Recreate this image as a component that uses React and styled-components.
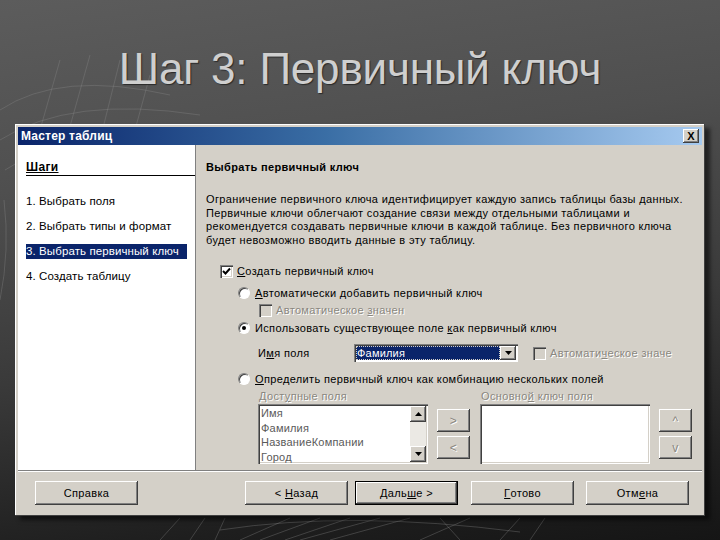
import React from 'react';
import styled, { createGlobalStyle, css } from 'styled-components';

const Global = createGlobalStyle`
  html, body { margin: 0; padding: 0; }
  body { width: 720px; height: 540px; overflow: hidden; background: #1c1c1c; }
`;

const Page = styled.div`
  position: relative;
  width: 720px;
  height: 540px;
  overflow: hidden;
  background: linear-gradient(172deg, #5c5c5c 0%, #4f4f4f 30%, #3a3a3a 60%, #1e1e1e 88%, #151515 100%);
  font-family: "Liberation Sans", Arial, sans-serif;
`;

const Decor = styled.svg`
  position: absolute;
  left: 0;
  top: 0;
  pointer-events: none;
`;

const Heading = styled.h1`
  position: relative;
  margin: 0;
  padding-top: 47px;
  height: 77px;
  text-align: center;
  font-family: "Liberation Sans", Arial, sans-serif;
  font-weight: 400;
  font-size: 44px;
  letter-spacing: -0.2px;
  color: #cfcfcf;
  text-shadow: 1px 1px 1px #2a2a2a;
  line-height: 1;
`;

const Window = styled.div`
  position: relative;
  margin-left: 15px;
  width: 684px;
  height: 386px;
  padding: 3px;
  background: #d4d0c8;
  box-shadow: inset -1px -1px 0 #404040, inset 1px 1px 0 #ffffff, 5px 4px 4px rgba(0, 0, 0, 0.55);
  font-family: "Liberation Sans", Tahoma, sans-serif;
  font-size: 11px;
  letter-spacing: 0.35px;
  color: #000;
  display: flex;
  flex-direction: column;
`;

const TitleBar = styled.div`
  height: 18px;
  display: flex;
  align-items: center;
  justify-content: space-between;
  padding: 0 3px 0 3px;
  background: linear-gradient(90deg, #0a246a 0%, #3a6ea5 45%, #a6caf0 100%);
  color: #fff;
  font-weight: 700;
  font-size: 12px;
  letter-spacing: 0.2px;
`;

const CloseBtn = styled.div`
  width: 16px;
  height: 14px;
  background: #d4d0c8;
  box-shadow: inset -1px -1px 0 #404040, inset 1px 1px 0 #fff, inset -2px -2px 0 #808080;
  display: flex;
  align-items: center;
  justify-content: center;
  color: #000;
  font-size: 11px;
  font-weight: 700;
  line-height: 1;
`;

const Body = styled.div`
  display: flex;
  height: 325px;
`;

const Steps = styled.div`
  width: 178px;
  background: #fff;
  border-right: 1px solid #808080;
  padding-top: 15px;
`;

const StepsTitle = styled.div`
  margin-left: 8px;
  padding-bottom: 1px;
  border-bottom: 1px solid #000;
  font-weight: 700;
  font-size: 12px;
  text-decoration: underline;
`;

const StepList = styled.div`
  margin-top: 18px;
  display: flex;
  flex-direction: column;
  gap: 10px;
`;

const Step = styled.div`
  margin-left: 8px;
  width: 161px;
  height: 15px;
  line-height: 15px;
  font-size: 11.5px;
  letter-spacing: 0.1px;
  white-space: nowrap;
  overflow: hidden;
  ${({ $active }) => $active && css`
    background: #0a246a;
    color: #fff;
  `}
`;

const Content = styled.div`
  flex: 1;
  padding: 16px 0 0 10px;
`;

const ContentTitle = styled.div`
  font-weight: 700;
  font-size: 11px;
  height: 14px;
`;

const Para = styled.p`
  margin: 18px 0 0 0;
  line-height: 13.5px;
  white-space: nowrap;
`;

const Row = styled.div`
  display: flex;
  align-items: center;
  height: 14px;
  margin-left: ${({ $indent }) => $indent || 0}px;
  margin-top: ${({ $top }) => $top || 0}px;
  color: ${({ $disabled }) => ($disabled ? '#8a8780' : '#000')};
  text-shadow: ${({ $disabled }) => ($disabled ? '1px 1px 0 #fff' : 'none')};
  white-space: nowrap;
`;

const Check = styled.span`
  width: 13px;
  height: 13px;
  box-sizing: border-box;
  margin-right: 4px;
  flex: none;
  background: ${({ $disabled }) => ($disabled ? '#d4d0c8' : '#fff')};
  box-shadow: inset 1px 1px 0 #808080, inset 2px 2px 0 #404040, inset -1px -1px 0 #fff, inset -2px -2px 0 #d4d0c8;
  display: flex;
  align-items: center;
  justify-content: center;
`;

const Radio = styled.span`
  width: 12px;
  height: 12px;
  border-radius: 50%;
  margin-right: 5px;
  flex: none;
  background: #fff;
  border-top: 1px solid #808080;
  border-left: 1px solid #808080;
  border-bottom: 1px solid #fff;
  border-right: 1px solid #fff;
  box-sizing: border-box;
  box-shadow: inset 1px 1px 0 #404040;
  display: flex;
  align-items: center;
  justify-content: center;
`;

const Dot = styled.span`
  width: 4px;
  height: 4px;
  border-radius: 50%;
  background: #000;
`;

const U = styled.span`
  text-decoration: underline;
`;

const FieldRow = styled.div`
  display: flex;
  align-items: center;
  margin: 9px 0 0 52px;
  height: 18px;
`;

const FieldLabel = styled.span`
  width: 96px;
`;

const Combo = styled.div`
  width: 164px;
  height: 18px;
  box-sizing: border-box;
  background: #fff;
  box-shadow: inset 1px 1px 0 #808080, inset 2px 2px 0 #404040, inset -1px -1px 0 #fff;
  display: flex;
  padding: 2px;
`;

const ComboValue = styled.div`
  flex: 1;
  background: #0a246a;
  color: #fff;
  outline: 1px dotted #d4d0c8;
  outline-offset: -1px;
  padding-left: 1px;
  line-height: 14px;
  letter-spacing: 0.2px;
`;

const ArrowBtn = styled.div`
  width: 16px;
  background: #d4d0c8;
  box-shadow: inset -1px -1px 0 #404040, inset 1px 1px 0 #fff, inset -2px -2px 0 #808080;
  display: flex;
  align-items: center;
  justify-content: center;
`;

const SideCheck = styled(Row)`
  margin-left: 15px;
`;

const ListsRow = styled.div`
  display: flex;
  margin: 4px 0 0 52px;
`;

const ListCol = styled.div`
  display: flex;
  flex-direction: column;
  width: ${({ $w }) => $w}px;
`;

const ListLabel = styled.div`
  color: #8a8780;
  text-shadow: 1px 1px 0 #fff;
  height: 12px;
  line-height: 12px;
  margin-bottom: 2px;
  padding-left: 1px;
  white-space: nowrap;
`;

const ListBox = styled.div`
  width: ${({ $w }) => $w}px;
  height: 60px;
  box-sizing: border-box;
  background: #fff;
  box-shadow: inset 1px 1px 0 #808080, inset 2px 2px 0 #404040, inset -1px -1px 0 #fff, inset -2px -2px 0 #d4d0c8;
  display: flex;
  padding: 2px;
  overflow: hidden;
`;

const ListItems = styled.div`
  flex: 1;
  color: #5a5a5a;
  line-height: 14.5px;
  padding-left: 1px;
  letter-spacing: 0.2px;
`;

const ScrollBar = styled.div`
  width: 16px;
  display: flex;
  flex-direction: column;
  justify-content: space-between;
  background: #ebe9e4;
`;

const ScrollBtn = styled.div`
  height: 16px;
  background: #d4d0c8;
  box-shadow: inset -1px -1px 0 #404040, inset 1px 1px 0 #fff, inset -2px -2px 0 #808080;
  display: flex;
  align-items: center;
  justify-content: center;
`;

const MoveCol = styled.div`
  display: flex;
  flex-direction: column;
  gap: 4px;
  margin: 19px 10px 0 9px;
`;

const MoveBtn = styled.div`
  width: 33px;
  height: 23px;
  background: #d4d0c8;
  box-shadow: inset -1px -1px 0 #404040, inset 1px 1px 0 #fff, inset -2px -2px 0 #808080;
  display: flex;
  align-items: center;
  justify-content: center;
  color: #8a8780;
  text-shadow: 1px 1px 0 #fff;
  font-size: 12px;
`;

const Separator = styled.div`
  height: 0;
  border-top: 1px solid #808080;
  border-bottom: 1px solid #fff;
`;

const Footer = styled.div`
  display: flex;
  align-items: center;
  padding: 9px 0 0 17px;
`;

const Button = styled.div`
  width: ${({ $w }) => $w || 103}px;
  height: 24px;
  margin-left: ${({ $gap }) => $gap || 0}px;
  box-sizing: border-box;
  background: #d4d0c8;
  display: flex;
  align-items: center;
  justify-content: center;
  white-space: pre;
  box-shadow: inset -1px -1px 0 #404040, inset 1px 1px 0 #fff, inset -2px -2px 0 #808080;
  ${({ $default }) => $default && css`
    border: 1px solid #000;
  `}
`;

const Triangle = () => (
  <svg width="7" height="4" viewBox="0 0 7 4">
    <path d="M0 0h7L3.5 4z" fill="#000" />
  </svg>
);

const UpTriangle = () => (
  <svg width="7" height="4" viewBox="0 0 7 4">
    <path d="M0 4h7L3.5 0z" fill="#000" />
  </svg>
);

const Tick = () => (
  <svg width="9" height="9" viewBox="0 0 9 9">
    <path d="M1 4l2.5 2.5L8 1.5" stroke="#000" strokeWidth="2" fill="none" />
  </svg>
);

const Wire = () => (
  <Decor width="720" height="540" viewBox="0 0 720 540">
    <g stroke="#8a8a8a" strokeOpacity="0.35" fill="none" strokeWidth="1">
      <path d="M0 110 Q60 70 170 95" />
      <path d="M0 140 Q70 95 200 115" />
      <path d="M5 170 Q80 120 220 125" />
      <path d="M60 60 L20 200" />
      <path d="M90 55 L55 180" />
      <path d="M120 60 L95 160" />
      <path d="M150 75 L135 130" />
      <path d="M0 300 Q10 250 4 200" />
      <path d="M160 540 L180 518" />
      <path d="M190 540 L205 518" />
      <path d="M215 540 L225 518" />
      <path d="M240 540 L290 518" />
      <path d="M260 540 L320 518" />
      <path d="M285 540 L350 518" />
      <path d="M300 540 L380 518" />
      <path d="M330 540 L410 518" />
      <path d="M220 530 Q350 510 520 532" />
      <path d="M420 540 L470 518" />
      <path d="M460 540 L440 518" />
      <path d="M500 540 L520 518" />
      <path d="M530 540 L545 518" />
    </g>
  </Decor>
);

export default function App() {
  return (
    <Page>
      <Global />
      <Wire />
      <Heading>Шаг 3: Первичный ключ</Heading>
      <Window>
        <TitleBar>
          <span>Мастер таблиц</span>
          <CloseBtn>X</CloseBtn>
        </TitleBar>
        <Body>
          <Steps>
            <StepsTitle>Шаги</StepsTitle>
            <StepList>
              <Step>1. Выбрать поля</Step>
              <Step>2. Выбрать типы и формат</Step>
              <Step $active>3. Выбрать первичный ключ</Step>
              <Step>4. Создать таблицу</Step>
            </StepList>
          </Steps>
          <Content>
            <ContentTitle>Выбрать первичный ключ</ContentTitle>
            <Para>
              Ограничение первичного ключа идентифицирует каждую запись таблицы базы данных.<br />
              Первичные ключи облегчают создание связи между отдельными таблицами и<br />
              рекомендуется создавать первичные ключи в каждой таблице. Без первичного ключа<br />
              будет невозможно вводить данные в эту таблицу.
            </Para>
            <Row $indent={14} $top={17}>
              <Check><Tick /></Check>
              <span><U>С</U>оздать первичный ключ</span>
            </Row>
            <Row $indent={32} $top={8}>
              <Radio />
              <span><U>А</U>втоматически добавить первичный ключ</span>
            </Row>
            <Row $indent={53} $top={3} $disabled>
              <Check $disabled />
              <span>Автоматическое <U>з</U>начен</span>
            </Row>
            <Row $indent={32} $top={4}>
              <Radio><Dot /></Radio>
              <span>Использовать существующее поле <U>к</U>ак первичный ключ</span>
            </Row>
            <FieldRow>
              <FieldLabel>И<U>м</U>я поля</FieldLabel>
              <Combo>
                <ComboValue>Фамилия</ComboValue>
                <ArrowBtn><Triangle /></ArrowBtn>
              </Combo>
              <SideCheck $disabled>
                <Check $disabled />
                <span>Автомати<U>ч</U>еское значе</span>
              </SideCheck>
            </FieldRow>
            <Row $indent={32} $top={10}>
              <Radio />
              <span><U>О</U>пределить первичный ключ как комбинацию нескольких полей</span>
            </Row>
            <ListsRow>
              <ListCol $w={170}>
                <ListLabel>Дост<U>у</U>пные поля</ListLabel>
                <ListBox $w={170}>
                  <ListItems>
                    <div>Имя</div>
                    <div>Фамилия</div>
                    <div>НазваниеКомпании</div>
                    <div>Город</div>
                  </ListItems>
                  <ScrollBar>
                    <ScrollBtn><UpTriangle /></ScrollBtn>
                    <ScrollBtn><Triangle /></ScrollBtn>
                  </ScrollBar>
                </ListBox>
              </ListCol>
              <MoveCol>
                <MoveBtn>&gt;</MoveBtn>
                <MoveBtn>&lt;</MoveBtn>
              </MoveCol>
              <ListCol $w={170}>
                <ListLabel>Основно<U>й</U> ключ поля</ListLabel>
                <ListBox $w={170} />
              </ListCol>
              <MoveCol>
                <MoveBtn>^</MoveBtn>
                <MoveBtn>v</MoveBtn>
              </MoveCol>
            </ListsRow>
          </Content>
        </Body>
        <Separator />
        <Footer>
          <Button>Справка</Button>
          <Button $gap={107}>{'< '}<U>Н</U>азад</Button>
          <Button $gap={7} $default>Даль<U>ш</U>е{' >'}</Button>
          <Button $gap={13}><U>Г</U>отово</Button>
          <Button $gap={12}>Отм<U>е</U>на</Button>
        </Footer>
      </Window>
    </Page>
  );
}
